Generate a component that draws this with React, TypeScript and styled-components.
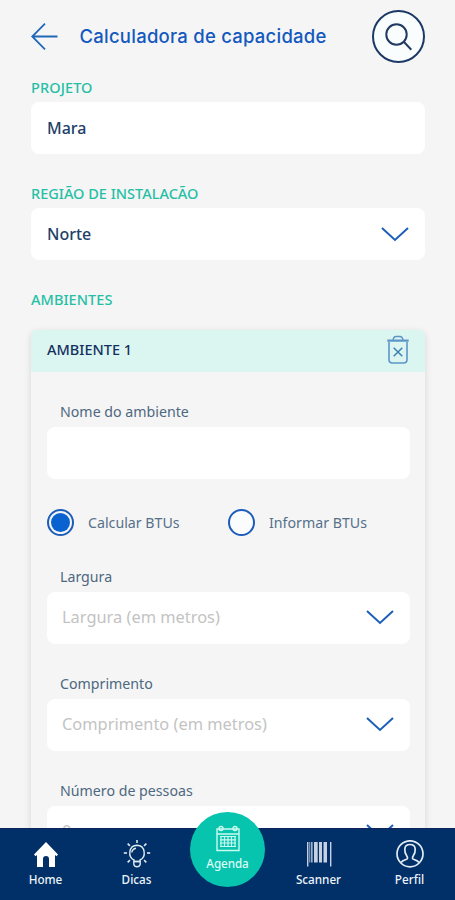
import React from 'react';
import styled, { createGlobalStyle } from 'styled-components';

const GlobalStyle = createGlobalStyle`
  * { box-sizing: border-box; }
  body { margin: 0; background: #f5f5f5; font-family: "Noto Sans", "Open Sans", sans-serif; }
`;

const Screen = styled.div`
  display: flex;
  flex-direction: column;
  width: 100%;
  height: 900px;
  overflow: hidden;
  background: #f5f5f5;
`;

const Content = styled.main`
  flex: 1;
  min-height: 0;
  overflow: hidden;
  padding: 10px 30px 0 31px;
`;

const Header = styled.header`
  display: flex;
  align-items: center;
  height: 53px;
  margin-bottom: 14px;
`;

const BackIcon = styled.svg`
  width: 28px;
  height: 28px;
  margin-right: 20px;
`;

const Title = styled.h1`
  flex: 1;
  margin: -2px 0 0;
  padding-left: 0.5px;
  color: #1459bd;
  font-family: "Inter", sans-serif;
  font-size: 18.5px;
  font-weight: 500;
  letter-spacing: 0.24px;
  line-height: 24px;
  white-space: nowrap;
`;

const SearchButton = styled.button`
  display: flex;
  align-items: center;
  justify-content: center;
  width: 53px;
  height: 53px;
  padding: 0;
  border: 2px solid #1c3866;
  border-radius: 50%;
  background: #f9fdfe;
`;

const Section = styled.section`
  margin-bottom: 29px;
`;

const SectionLabel = styled.h2<{ $spacing: number }>`
  margin: 0 0 5px;
  color: #26bfa5;
  font-size: 14.5px;
  font-weight: 500;
  line-height: 20px;
  letter-spacing: ${(p) => p.$spacing}px;
  white-space: nowrap;
`;

const FieldBox = styled.div<{ $raised?: boolean }>`
  display: flex;
  align-items: center;
  justify-content: space-between;
  height: 52px;
  padding: 0 16px 0 15px;
  padding-bottom: ${(p) => (p.$raised ? 2 : 0)}px;
  border-radius: 8px;
  background: #fff;
`;

const Value = styled.span`
  color: #213f68;
  font-size: 16px;
  font-weight: 500;
  padding-left: 1px;
`;

const Placeholder = styled.span`
  margin-top: -2px;
  color: #c3c3c3;
  font-size: 16.4px;
  white-space: nowrap;
`;

const Card = styled.section`
  margin-top: 21px;
  height: 600px;
  border-radius: 6px 6px 0 0;
  overflow: hidden;
  background: #f5f5f5;
  box-shadow: 0 2px 7px rgba(0, 0, 0, 0.13);
`;

const CardHeader = styled.div`
  display: flex;
  align-items: center;
  justify-content: space-between;
  height: 42px;
  padding: 0 15px 2px 16px;
  background: #dbf6f0;
`;

const CardTitle = styled.h3`
  margin: -2px 0 0;
  color: #13305f;
  font-size: 14.5px;
  font-weight: 500;
`;

const CardBody = styled.div`
  padding: 30px 15px 0 16px;
`;

const InputGroup = styled.div`
  margin-bottom: 30px;
`;

const InputLabel = styled.label`
  display: block;
  margin: 0 0 5px 13px;
  color: #4d6880;
  font-size: 14.2px;
  line-height: 20px;
`;

const RadioRow = styled.div`
  display: grid;
  grid-template-columns: 181px 1fr;
  height: 27px;
  margin-bottom: 31px;
`;

const RadioOption = styled.div`
  display: flex;
  align-items: center;
  gap: 14px;
  color: #56708a;
  font-size: 14.2px;
  white-space: nowrap;
`;

const RadioDot = styled.span<{ $checked?: boolean }>`
  width: 27px;
  height: 27px;
  flex: none;
  padding: 2px;
  border: 2.5px solid #1c5dba;
  border-radius: 50%;
  background: ${(p) => (p.$checked ? '#0a62d0' : '#fafcfe')};
  background-clip: content-box;
  ${(p) => !p.$checked && 'padding: 0;'}
`;

const NavBar = styled.nav`
  display: grid;
  grid-template-columns: repeat(5, 1fr);
  flex: none;
  height: 72px;
  background: #003067;
  border-top: 1px solid #10235a;
`;

const NavItem = styled.div`
  display: flex;
  flex-direction: column;
  align-items: center;
  padding-top: 11px;
  color: #edf3fa;
`;

const NavIcon = styled.svg`
  width: 28px;
  height: 28px;
`;

const NavText = styled.span`
  margin-top: 2px;
  font-size: 11.7px;
  font-weight: 500;
  line-height: 18px;
`;

const AgendaButton = styled(NavItem)`
  width: 75px;
  height: 75px;
  margin: -17px 0 0;
  padding-top: 13px;
  justify-self: center;
  border-radius: 50%;
  background: #06c4ae;
  color: #dcfbf5;
  position: relative;
`;

const AgendaText = styled(NavText)`
  margin-top: 1px;
  letter-spacing: -0.1px;
`;

const Chevron = () => (
  <svg width="28" height="16" viewBox="0 0 28 16" fill="none" stroke="#1c5fb8" strokeWidth="2">
    <path d="M1 2 14 14 27 2" />
  </svg>
);

const TrashIcon = () => (
  <svg width="24" height="30" viewBox="0 0 24 30" fill="none" stroke="#5d95c8">
    <path d="M1.300 5.600h21.400" strokeWidth="2.400" />
    <path d="M7 4.800c.5-2.800 1.600-3.300 3-3.300h4c1.400 0 2.500.5 3 3.300" strokeWidth="1.400" />
    <path d="M3 7v17.500q0 3.500 3.500 3.500h11q3.500 0 3.500-3.500V7" strokeWidth="1.600" />
    <path d="m7.700 12.700 8.600 8.600m0-8.600-8.600 8.600" strokeWidth="1.500" stroke="#3f7fb8" />
  </svg>
);

interface SelectFieldProps {
  label: string;
  placeholder: string;
}

const SelectField = ({ label, placeholder }: SelectFieldProps) => (
  <InputGroup>
    <InputLabel>{label}</InputLabel>
    <FieldBox $raised>
      <Placeholder>{placeholder}</Placeholder>
      <Chevron />
    </FieldBox>
  </InputGroup>
);

const rays = [0, 45, 90, 135, 225, 270, 315];

export default function App() {
  return (
    <>
      <GlobalStyle />
      <Screen>
        <Content>
          <Header>
            <BackIcon viewBox="0 0 28 28" fill="none" stroke="#2168b7" strokeWidth="1.8">
              <path d="M26.500 13.500H1.200M14 .7 1.200 13.500 14 26.300" />
            </BackIcon>
            <Title>Calculadora de capacidade</Title>
            <SearchButton aria-label="Buscar">
              <svg width="28" height="28" viewBox="0 0 28 28" fill="none" stroke="#213a61" strokeWidth="2">
                <circle cx="11.500" cy="11.500" r="10.200" />
                <path d="m18.800 18.800 7.500 8" />
              </svg>
            </SearchButton>
          </Header>
          <Section>
            <SectionLabel $spacing={0.1}>PROJETO</SectionLabel>
            <FieldBox><Value>Mara</Value></FieldBox>
          </Section>
          <Section>
            <SectionLabel $spacing={0}>REGIÃO DE INSTALACÃO</SectionLabel>
            <FieldBox>
              <Value>Norte</Value>
              <Chevron />
            </FieldBox>
          </Section>
          <SectionLabel $spacing={0.05}>AMBIENTES</SectionLabel>
          <Card>
            <CardHeader>
              <CardTitle>AMBIENTE 1</CardTitle>
              <TrashIcon />
            </CardHeader>
            <CardBody>
              <InputGroup>
                <InputLabel>Nome do ambiente</InputLabel>
                <FieldBox />
              </InputGroup>
              <RadioRow>
                <RadioOption><RadioDot $checked />Calcular BTUs</RadioOption>
                <RadioOption><RadioDot />Informar BTUs</RadioOption>
              </RadioRow>
              <SelectField label="Largura" placeholder="Largura (em metros)" />
              <SelectField label="Comprimento" placeholder="Comprimento (em metros)" />
              <SelectField label="Número de pessoas" placeholder="0" />
            </CardBody>
          </Card>
        </Content>
        <NavBar>
          <NavItem>
            <NavIcon viewBox="0 0 28 28" fill="#fff">
              <path d="M14 2 26 14.500l-1.500 1.800-1.500-1.200V27h-6v-8q0-3-3-3t-3 3v8H5V15.100l-1.500 1.200L2 14.500Z" />
            </NavIcon>
            <NavText>Home</NavText>
          </NavItem>
          <NavItem>
            <NavIcon viewBox="0 0 28 28" fill="none" stroke="#dce8ef" strokeWidth="1.400">
              <path d="M11 21.500V20C4.500 17 5.500 5.500 14 5.200c8.500.3 9.500 11.800 3 14.800V21.500Z" />
              <path d="M10.800 21.500h6.400v2.500q-.2 2.800-3.200 2.800t-3.200-2.800ZM8.800 12.500q.4-3.600 4.200-4.300" />
              {rays.map((a) => (
                <path key={a} d="M14-.2v3.200" strokeWidth="1.600" transform={`rotate(${a} 14 13)`} />
              ))}
            </NavIcon>
            <NavText>Dicas</NavText>
          </NavItem>
          <AgendaButton>
            <NavIcon viewBox="0 0 28 28" fill="none" stroke="#cbfaf0" strokeWidth="1.400">
              <path d="M3 4h22v21.500H3ZM3 9h22" />
              <circle cx="7" cy="3.500" r="2" />
              <circle cx="21" cy="3.500" r="2" />
              <path strokeWidth="1.200" d="M6 11.500h16M6 14.800h16M6 18h16M6 21.500h16M7 11v11M10.500 11v11M14 11v11M17.500 11v11M21 11v11" />
            </NavIcon>
            <AgendaText>Agenda</AgendaText>
          </AgendaButton>
          <NavItem>
            <NavIcon viewBox="0 0 28 28" fill="#c5d1e3">
              <path d="M2 2h1.400v24.500H2ZM4.400 2h.8v20.500h-.8ZM6.200 2h1.300v20.500H6.200ZM9 2h3.700v20.500H9ZM14 2h3v20.500h-3ZM18.500 2H22v20.500h-3.500ZM25 2h1.400v24.500H25Z" />
            </NavIcon>
            <NavText>Scanner</NavText>
          </NavItem>
          <NavItem>
            <NavIcon viewBox="0 0 28 28" fill="none" stroke="#e2ebf5" strokeWidth="1.700">
              <circle cx="14" cy="13.800" r="13" />
              <path d="M5 22.500q1.500-2 5-3c2-.5 1.800-2 .8-3.500-2-3-2.200-5-2-7C9 6 11 4.500 14 4.500S19 6 19.200 9c.2 2 0 4-2 7-1 1.500-1.200 3 .8 3.500q3.500 1 5 3" />
            </NavIcon>
            <NavText>Perfil</NavText>
          </NavItem>
        </NavBar>
      </Screen>
    </>
  );
}
